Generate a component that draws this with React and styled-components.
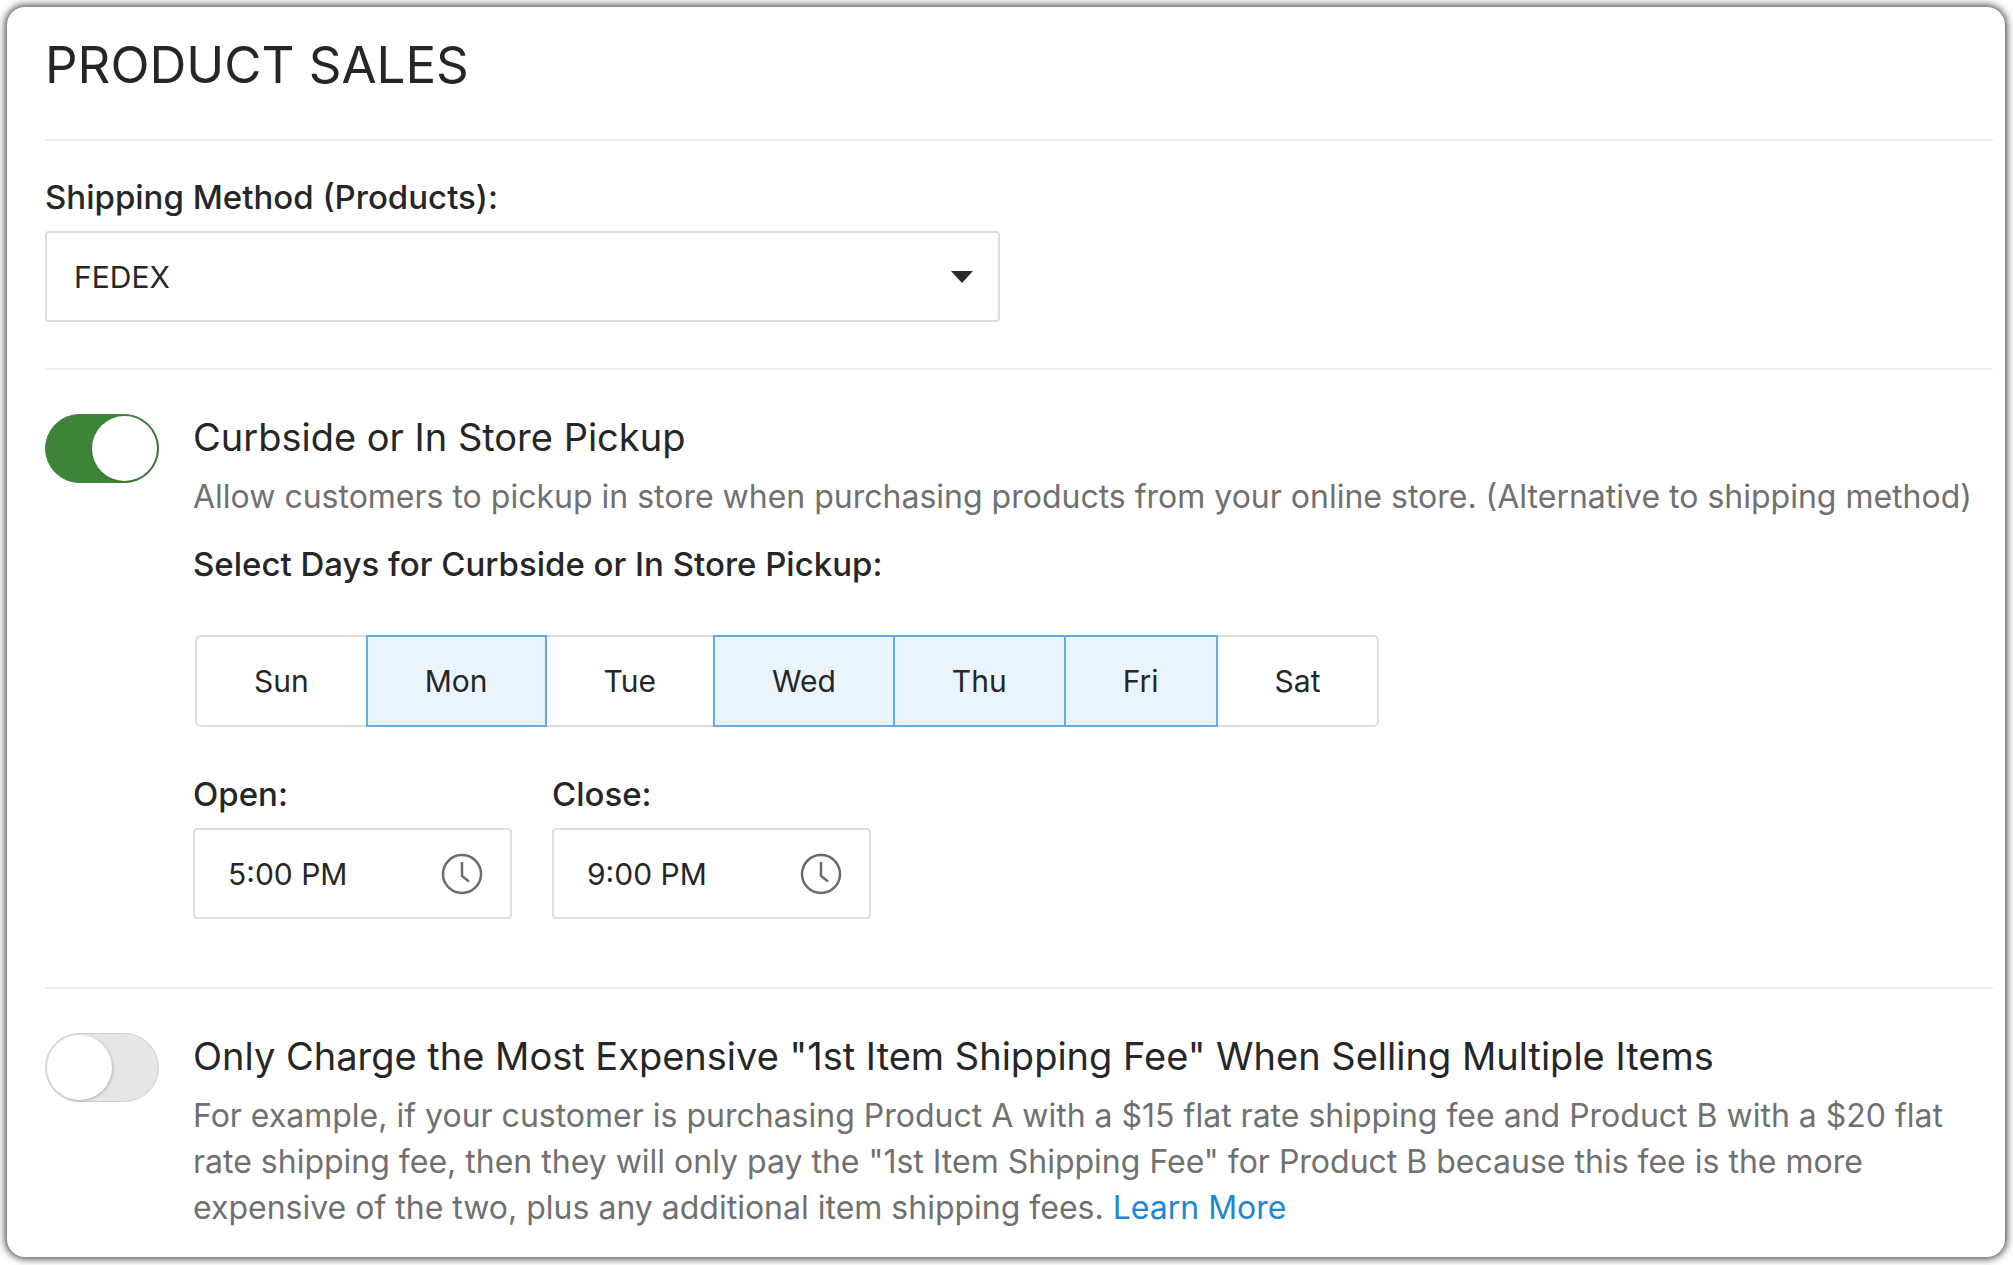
import { useState } from "react";
import styled, { createGlobalStyle } from "styled-components";

const WEEK = ["Sun", "Mon", "Tue", "Wed", "Thu", "Fri", "Sat"];

const TimeField = ({ id, label, value, onChange }) => (
	<Field>
		<Label htmlFor={id}>{label}</Label>
		<TimeBox>
			<TimeInput id={id} type="text" value={value} onChange={(e) => onChange(e.target.value)} />
			<ClockButton type="button" aria-label={`Pick ${label}`}>
				<svg width="42" height="42" viewBox="0 0 42 42" fill="none" stroke="#6b6b6b" strokeWidth="2.5">
					<circle cx="21" cy="21" r="19" />
					<path d="M21 9v14l7 5.500" />
				</svg>
			</ClockButton>
		</TimeBox>
	</Field>
)

const App = () => {

	const [method, setMethod] = useState("FEDEX");
	const [pickup, setPickup] = useState(true);
	const [singleFee, setSingleFee] = useState(false);
	const [days, setDays] = useState(["Mon", "Wed", "Thu", "Fri"]);
	const [open, setOpen] = useState("5:00 PM");
	const [close, setClose] = useState("9:00 PM");

	const toggleDay = (day) => {
		setDays(days.includes(day) ? days.filter((d) => d !== day) : [...days, day]);
	}

	return (
		<Page>
			<GlobalStyle />
			<Card>
				<Title>PRODUCT SALES</Title>
				<ShippingSection>
					<Label htmlFor="method">Shipping Method (Products):</Label>
					<SelectBox>
						<Select id="method" value={method} onChange={(e) => setMethod(e.target.value)}>
							<option>FEDEX</option>
							<option>UPS</option>
							<option>USPS</option>
						</Select>
						<svg width="22" height="12" viewBox="0 0 22 12" aria-hidden="true">
							<path d="M0 0h22L11 12z" fill="#2b2b2b" />
						</svg>
					</SelectBox>
				</ShippingSection>
				<OptionSection>
					<Toggle id="pickup" type="checkbox" role="switch" checked={pickup} onChange={() => setPickup(!pickup)} />
					<OptionBody>
						<OptionTitle htmlFor="pickup">Curbside or In Store Pickup</OptionTitle>
						<Description>
							Allow customers to pickup in store when purchasing products from your online store. (Alternative to shipping method)
						</Description>
						<DaysLabel id="days">Select Days for Curbside or In Store Pickup:</DaysLabel>
						<DayGroup role="group" aria-labelledby="days">
							{WEEK.map((day) => (
								<DayButton
									key={day}
									type="button"
									aria-pressed={days.includes(day)}
									$active={days.includes(day)}
									onClick={() => toggleDay(day)}
								>
									{day}
								</DayButton>
							))}
						</DayGroup>
						<Times>
							<TimeField id="open" label="Open:" value={open} onChange={setOpen} />
							<TimeField id="close" label="Close:" value={close} onChange={setClose} />
						</Times>
					</OptionBody>
				</OptionSection>
				<OptionSection>
					<Toggle id="fee" type="checkbox" role="switch" checked={singleFee} onChange={() => setSingleFee(!singleFee)} />
					<OptionBody>
						<OptionTitle htmlFor="fee">Only Charge the Most Expensive "1st Item Shipping Fee" When Selling Multiple Items</OptionTitle>
						<Description>
							For example, if your customer is purchasing Product A with a $15 flat rate shipping fee and Product B with a $20 flat rate shipping fee, then they will only pay the "1st Item Shipping Fee" for Product B because this fee is the more expensive of the two, plus any additional item shipping fees. <a href="#learn-more">Learn More</a>
						</Description>
					</OptionBody>
				</OptionSection>
			</Card>
		</Page>
	)
}

const GlobalStyle = createGlobalStyle`
	* {
		box-sizing: border-box;
	}

	body {
		margin: 0;
		background: #ffffff;
		color: #262626;
		font-family: Inter, "Liberation Sans", sans-serif;
	}

	button, input, select {
		font: inherit;
		color: inherit;
	}
`

const Page = styled.div`
	display: flex;
	min-height: 100vh;
	padding: 7px 8px 8px 7px;
`

const Card = styled.main`
	flex: 1;
	padding: 22px 12px 20px 38px;
	background: #ffffff;
	border-radius: 18px;
	box-shadow: 0 0 8px 1px #222222;
`

const Title = styled.h1`
	margin: 0;
	padding-bottom: 38px;
	font-weight: 400;
	font-size: 51px;
	line-height: 72px;
`

const ShippingSection = styled.section`
	display: flex;
	flex-direction: column;
	gap: 12px;
	padding: 34px 0 46px;
	border-top: 2px solid #eeeeee;
`

const Label = styled.label`
	font-weight: 500;
	font-size: 33px;
	line-height: 44px;
`

const SelectBox = styled.div`
	display: grid;
	align-items: center;
	width: 49%;
	height: 91px;

	svg {
		grid-area: 1 / 1;
		justify-self: end;
		margin-right: 27px;
		pointer-events: none;
	}
`

const Select = styled.select`
	grid-area: 1 / 1;
	height: 100%;
	padding: 0 60px 0 27px;
	appearance: none;
	background: #ffffff;
	border: 2px solid #dcdcdc;
	border-radius: 4px;
	font-size: 30px;
`

const OptionSection = styled.section`
	display: flex;
	align-items: flex-start;
	gap: 34px;
	padding: 44px 0 0;
	border-top: 2px solid #eeeeee;
`

const Toggle = styled.input`
	flex: none;
	display: flex;
	width: 114px;
	height: 69px;
	margin: 0;
	padding: 1px;
	appearance: none;
	background: #e6e6e6;
	border: 1px solid #cfcfcf;
	border-radius: 35px;
	cursor: pointer;

	&::before {
		content: "";
		width: 65px;
		height: 65px;
		background: #ffffff;
		border-radius: 50%;
		box-shadow: 1px 1px 3px rgba(0, 0, 0, 0.2);
	}

	&:checked {
		justify-content: flex-end;
		background: #3e8438;
		border-color: #3e8438;
	}
`

const OptionBody = styled.div`
	flex: 1;
	min-width: 0;
`

const OptionTitle = styled.label`
	display: block;
	font-weight: 400;
	font-size: 38px;
	line-height: 46px;
`

const Description = styled.p`
	margin: 14px 0 0;
	color: #707070;
	font-size: 32px;
	line-height: 46px;

	a {
		color: #1c87d6;
		text-decoration: none;
	}
`

const DaysLabel = styled.div`
	margin-top: 22px;
	font-weight: 500;
	font-size: 33px;
	line-height: 44px;
`

const DayGroup = styled.div`
	display: flex;
	width: fit-content;
	margin: 49px 0 0 2px;
`

const DayButton = styled.button`
	height: 92px;
	padding: 0 57px;
	background: ${({ $active }) => ($active ? "#e9f4fc" : "#ffffff")};
	border: 2px solid ${({ $active }) => ($active ? "#62aee3" : "#dddddd")};
	font-size: 30px;
	cursor: pointer;
	z-index: ${({ $active }) => ($active ? 1 : 0)};

	&:not(:first-child) {
		margin-left: -2px;
	}

	&:first-child {
		border-radius: 6px 0 0 6px;
	}

	&:last-child {
		border-radius: 0 6px 6px 0;
	}
`

const Times = styled.div`
	display: flex;
	gap: 40px;
	margin: 45px 0 68px;
`

const Field = styled.div`
	display: flex;
	flex-direction: column;
	gap: 12px;
`

const TimeBox = styled.div`
	display: flex;
	align-items: center;
	width: 319px;
	height: 91px;
	padding: 0 27px 0 33px;
	border: 2px solid #dfdfdf;
	border-radius: 4px;
`

const TimeInput = styled.input`
	flex: 1;
	min-width: 0;
	padding: 0;
	border: 0;
	outline: 0;
	background: none;
	font-size: 30px;
`

const ClockButton = styled.button`
	display: flex;
	padding: 0;
	border: 0;
	background: none;
	cursor: pointer;
`

export default App;
